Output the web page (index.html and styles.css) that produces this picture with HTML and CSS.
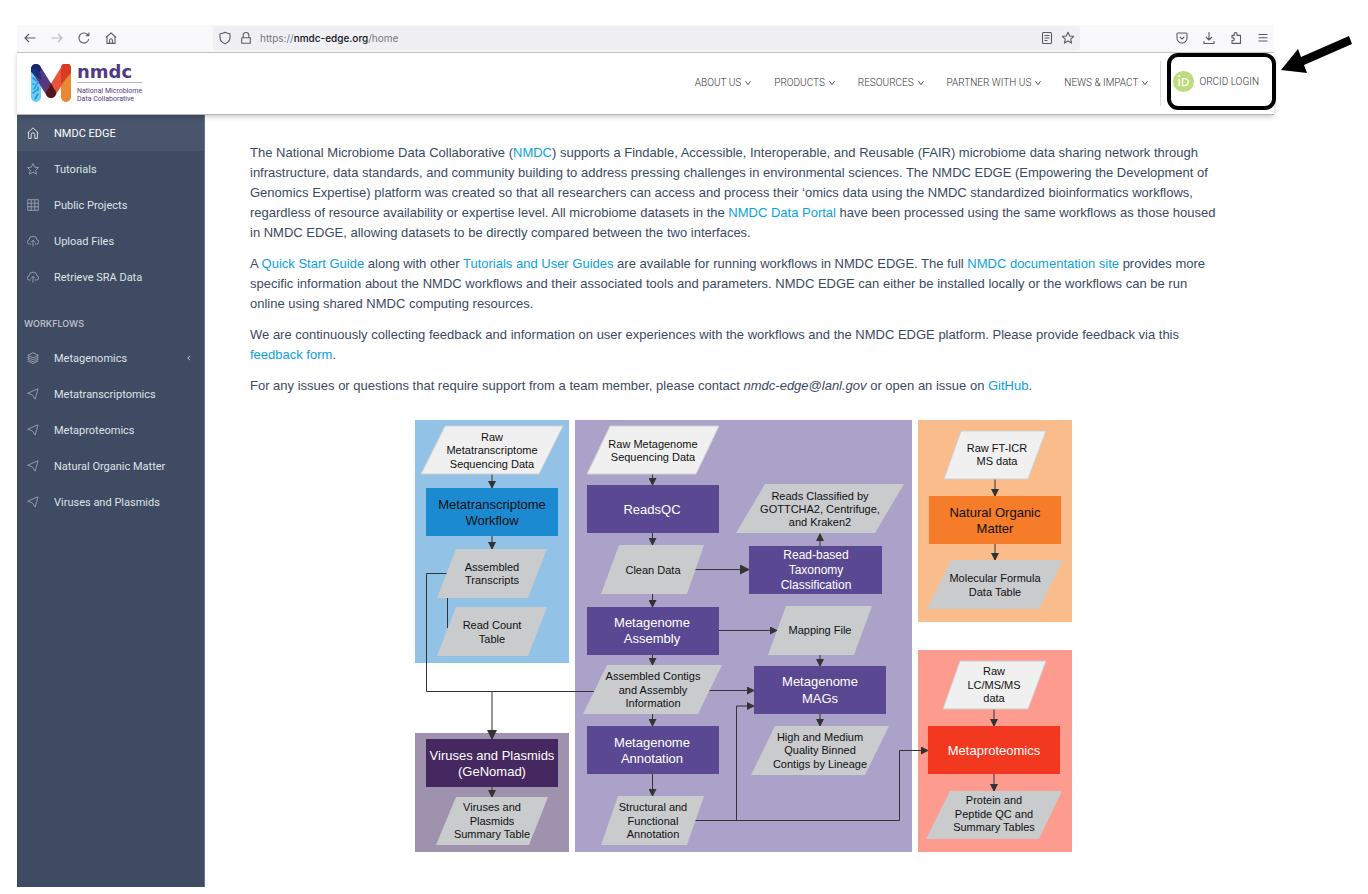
FILE: index.html
```html
<!DOCTYPE html>
<html lang="en">
<head>
<meta charset="utf-8">
<title>NMDC EDGE</title>
<link rel="stylesheet" href="styles.css">
</head>
<body>
<div class="window">
  <div class="browser-bar">
    <div class="browser-nav">
      <button class="bar-button" aria-label="Back"><svg class="bar-icon" viewBox="0 0 14 14"><path d="M12.5 7H2M6 3L2 7l4 4"/></svg></button>
      <button class="bar-button bar-button-off" aria-label="Forward"><svg class="bar-icon" viewBox="0 0 14 14"><path d="M1.500 7H12M8 3l4 4-4 4"/></svg></button>
      <button class="bar-button" aria-label="Reload"><svg class="bar-icon" viewBox="0 0 14 14"><path d="M11.800 8.200a5 5 0 1 1-1.300-4.700l1 1M11.900 1.600v3.200H8.700"/></svg></button>
      <button class="bar-button" aria-label="Home"><svg class="bar-icon" viewBox="0 0 14 14"><path d="M2 6.500L7 1.800l5 4.700M3 6v6.400h8V6M5.600 12.400V9.200a1.400 1.400 0 0 1 2.800 0v3.200"/></svg></button>
    </div>
    <div class="address">
      <svg class="bar-icon" viewBox="0 0 14 14"><path d="M7 1.300c1.600.9 3.200 1.300 5 1.400v3.800c0 3-2 5-5 6.300-3-1.300-5-3.300-5-6.300V2.700c1.800-.1 3.400-.5 5-1.400z"/></svg>
      <svg class="bar-icon" viewBox="0 0 14 14"><path d="M2.700 6.800h8.600v5.500H2.700zM4.200 6.800V4.300a2.800 2.800 0 0 1 5.600 0v2.500"/></svg>
      <span class="url">https://<b>nmdc-edge.org</b>/home</span>
      <svg class="bar-icon bar-reader" viewBox="0 0 14 14"><rect x="2.500" y="1.500" width="9" height="11" rx="1"/><path d="M4.500 4.500h5M4.500 7h5M4.500 9.500h3"/></svg>
      <svg class="bar-icon" viewBox="0 0 14 14"><path d="M7 1.300l1.700 3.700 4 .4-3 2.700.9 4-3.600-2.100-3.600 2.100.9-4-3-2.700 4-.4z"/></svg>
    </div>
    <div class="browser-tools">
      <button class="bar-button" aria-label="Pocket"><svg class="bar-icon" viewBox="0 0 14 14"><path d="M2 3a1 1 0 0 1 1-1h8a1 1 0 0 1 1 1v4a5 5 0 0 1-10 0zM4.700 5.800L7 8l2.300-2.200"/></svg></button>
      <button class="bar-button" aria-label="Downloads"><svg class="bar-icon" viewBox="0 0 14 14"><path d="M7 1v8M4 6l3 3 3-3M2 10v2.500h10V10"/></svg></button>
      <button class="bar-button" aria-label="Extensions"><svg class="bar-icon" viewBox="0 0 14 14"><path d="M5.200 4.400V3a1.400 1.400 0 0 1 2.800 0v1.400h3.500v8H3V9.500h1a1.300 1.300 0 0 0 0-2.600H3V4.400z"/></svg></button>
      <button class="bar-button" aria-label="Menu"><svg class="bar-icon" viewBox="0 0 14 14"><path d="M2.500 3.500h9M2.500 6.700h9M2.500 10h9"/></svg></button>
    </div>
  </div>

  <header class="site-header">
    <a class="logo" href="#">
      <svg class="logo-mark" viewBox="0 0 40 38">
        <g fill="none" stroke-width="10" stroke-linecap="round">
          <path d="M5 5V33" stroke="#6fcdf3"/>
          <path d="M35 5V33" stroke="#e88a35"/>
          <path d="M5 5L20 29" stroke="#55367f"/>
          <path d="M35 5L20 29" stroke="#e9553c"/>
        </g>
        <circle cx="5" cy="5" r="5" fill="#14276b"/>
        <path d="M0 5h5l5 5v6L0 8z" fill="#1c2f7c"/>
        <path d="M30 3a5 5 0 0 1 10 2v4l-10 11z" fill="#d93b20"/>
        <circle cx="20" cy="29" r="5" fill="#4f151f"/>
        <path d="M16 27l4-8 4 8z" fill="#4f151f"/>
        <path d="M2 14l3 3M7 18l-4 7M2 29l4-3M7 30l-3 5M7 23v3M2 20h1" stroke="#1a96d8" stroke-width="1.500" stroke-linecap="round"/>
      </svg>
      <span class="logo-words">
        <span class="logo-name">nmdc</span>
        <span class="logo-sub">National Microbiome<br>Data Collaborative</span>
      </span>
    </a>
    <nav class="site-nav">
      <a href="#">ABOUT US<svg class="chevron" viewBox="0 0 6 6"><path d="M.5 1.200L3 4.700l2.500-3.500"/></svg></a>
      <a href="#">PRODUCTS<svg class="chevron" viewBox="0 0 6 6"><path d="M.5 1.200L3 4.700l2.500-3.500"/></svg></a>
      <a href="#">RESOURCES<svg class="chevron" viewBox="0 0 6 6"><path d="M.5 1.200L3 4.700l2.500-3.500"/></svg></a>
      <a href="#">PARTNER WITH US<svg class="chevron" viewBox="0 0 6 6"><path d="M.5 1.200L3 4.700l2.500-3.500"/></svg></a>
      <a href="#">NEWS &amp; IMPACT<svg class="chevron" viewBox="0 0 6 6"><path d="M.5 1.200L3 4.700l2.500-3.500"/></svg></a>
    </nav>
    <div class="login">
      <button class="login-button">
        <svg class="orcid" viewBox="0 0 22 22"><circle cx="11" cy="11" r="11" fill="#bddc7c"/><g fill="none" stroke="#fff" stroke-width="1.500"><path d="M6.500 8v8M10 8v7.300h2.300a3.600 3.600 0 0 0 0-7.300z"/></g><circle cx="6.500" cy="5.300" r="1" fill="#fff"/></svg>
        ORCID LOGIN
      </button>
    </div>
  </header>

  <div class="body">
    <aside class="sidebar">
      <ul class="menu">
        <li><a class="menu-link menu-link-active" href="#"><svg class="menu-icon" viewBox="0 0 12 12"><path d="M.6 6L6 .8 11.400 6M1.600 5.200v6.200h2.600V7.600a1.800 1.800 0 0 1 3.600 0v3.800h2.600V5.200"/></svg>NMDC EDGE</a></li>
        <li><a class="menu-link" href="#"><svg class="menu-icon" viewBox="0 0 12 12"><path d="M6 .6l1.700 3.600 3.800.4-2.800 2.600.8 4L6 9.200l-3.500 2 .8-4L.5 4.600l3.800-.4z"/></svg>Tutorials</a></li>
        <li><a class="menu-link" href="#"><svg class="menu-icon" viewBox="0 0 12 12"><path d="M.7.7h10.600v10.600H.7zM4.200.7v10.600M7.800.7v10.600M.7 4.200h10.600M.7 7.800h10.600"/></svg>Public Projects</a></li>
        <li><a class="menu-link" href="#"><svg class="menu-icon" viewBox="0 0 12 12"><path d="M4 9H2.500A2 2 0 0 1 2 5a4 3.800 0 0 1 8 0 2 2 0 0 1-.5 4H8M6 11.500V5.500M4 7.300l2-2 2 2"/></svg>Upload Files</a></li>
        <li><a class="menu-link" href="#"><svg class="menu-icon" viewBox="0 0 12 12"><path d="M4 9H2.500A2 2 0 0 1 2 5a4 3.800 0 0 1 8 0 2 2 0 0 1-.5 4H8M6 11.500V5.500M4 7.300l2-2 2 2"/></svg>Retrieve SRA Data</a></li>
      </ul>
      <h2 class="menu-title">WORKFLOWS</h2>
      <ul class="menu">
        <li><a class="menu-link" href="#"><svg class="menu-icon" viewBox="0 0 12 12"><path d="M6 .8l5.300 2.500L6 5.800.7 3.300zM2.300 4.600L.7 5.400 6 7.900l5.300-2.500-1.600-.8M2.300 6.600l-1.600.8L6 9.900l5.300-2.500-1.600-.8M.7 9L6 11.500 11.300 9"/></svg>Metagenomics<svg class="menu-arrow" viewBox="0 0 6 6"><path d="M4 .8L1.800 3 4 5.200"/></svg></a></li>
        <li><a class="menu-link" href="#"><svg class="menu-icon" viewBox="0 0 12 12"><path d="M11 .8L.7 5.200l4.500 1.600 3 4.300z"/></svg>Metatranscriptomics</a></li>
        <li><a class="menu-link" href="#"><svg class="menu-icon" viewBox="0 0 12 12"><path d="M11 .8L.7 5.200l4.500 1.600 3 4.300z"/></svg>Metaproteomics</a></li>
        <li><a class="menu-link" href="#"><svg class="menu-icon" viewBox="0 0 12 12"><path d="M11 .8L.7 5.200l4.500 1.600 3 4.300z"/></svg>Natural Organic Matter</a></li>
        <li><a class="menu-link" href="#"><svg class="menu-icon" viewBox="0 0 12 12"><path d="M11 .8L.7 5.200l4.500 1.600 3 4.300z"/></svg>Viruses and Plasmids</a></li>
      </ul>
    </aside>

    <main class="content">
      <p>The National Microbiome Data Collaborative (<a href="#">NMDC</a>) supports a Findable, Accessible, Interoperable, and Reusable (FAIR) microbiome data sharing network through infrastructure, data standards, and community building to address pressing challenges in environmental sciences. The NMDC EDGE (Empowering the Development of Genomics Expertise) platform was created so that all researchers can access and process their ‘omics data using the NMDC standardized bioinformatics workflows, regardless of resource availability or expertise level. All microbiome datasets in the <a href="#">NMDC Data Portal</a> have been processed using the same workflows as those housed in NMDC EDGE, allowing datasets to be directly compared between the two interfaces.</p>
      <p>A <a href="#">Quick Start Guide</a> along with other <a href="#">Tutorials and User Guides</a> are available for running workflows in NMDC EDGE. The full <a href="#">NMDC documentation site</a> provides more specific information about the NMDC workflows and their associated tools and parameters. NMDC EDGE can either be installed locally or the workflows can be run online using shared NMDC computing resources.</p>
      <p>We are continuously collecting feedback and information on user experiences with the workflows and the NMDC EDGE platform. Please provide feedback via this <a href="#">feedback form</a>.</p>
      <p>For any issues or questions that require support from a team member, please contact <em>nmdc-edge@lanl.gov</em> or open an issue on <a href="#">GitHub</a>.</p>

      <svg class="diagram" viewBox="415 420 657 433" role="img" aria-label="NMDC workflows">
        <defs>
          <marker id="head" viewBox="0 0 8 8" refX="7" refY="4" markerWidth="8" markerHeight="8" markerUnits="userSpaceOnUse" orient="auto"><path d="M0 0L8 4 0 8z" fill="#333"/></marker>
          <marker id="head-large" viewBox="0 0 10 10" refX="9" refY="5" markerWidth="10" markerHeight="10" markerUnits="userSpaceOnUse" orient="auto"><path d="M0 0L10 5 0 10z" fill="#333"/></marker>
        </defs>
        <rect class="panel-blue" x="415" y="420" width="154" height="243"/>
        <rect class="panel-purple" x="575" y="420" width="337" height="432"/>
        <rect class="panel-orange" x="918" y="420" width="154" height="202"/>
        <rect class="panel-red" x="918" y="650" width="154" height="202"/>
        <rect class="panel-plum" x="415" y="733" width="154" height="119"/>

        <g class="wire">
          <path d="M447 573.500H426.500V691.500H595"/>
          <path d="M447.500 598V628"/>
          <path d="M687 820.500H899.500V750.500H928" marker-end="url(#head)"/>
          <path d="M736.500 820V706H754" marker-end="url(#head)"/>
          <path d="M695 569.500H749" marker-end="url(#head-large)"/>
          <path d="M719 630.500H777" marker-end="url(#head)"/>
          <path d="M709 690.500H754" marker-end="url(#head)"/>
          <path d="M492 474V488" marker-end="url(#head)"/>
          <path d="M492 536V549" marker-end="url(#head)"/>
          <path d="M492 692V739" marker-end="url(#head-large)"/>
          <path d="M492 787V797" marker-end="url(#head)"/>
          <path d="M652.500 474V485" marker-end="url(#head)"/>
          <path d="M652.500 533V545" marker-end="url(#head)"/>
          <path d="M652.500 594V607" marker-end="url(#head)"/>
          <path d="M652.500 655V665" marker-end="url(#head)"/>
          <path d="M652.500 714V726" marker-end="url(#head)"/>
          <path d="M652.500 774V796" marker-end="url(#head)"/>
          <path d="M820 546V534" marker-end="url(#head)"/>
          <path d="M820 655V666" marker-end="url(#head)"/>
          <path d="M820 714V726" marker-end="url(#head)"/>
          <path d="M995 479V496" marker-end="url(#head)"/>
          <path d="M995 544V560" marker-end="url(#head)"/>
          <path d="M994 709V726" marker-end="url(#head)"/>
          <path d="M994 774V791" marker-end="url(#head)"/>
        </g>

        <g class="input">
          <path d="M445 426H563L539 474H421z"/>
          <path d="M610 426H719L696 474H587z"/>
          <path d="M961 431H1046L1028 479H944z"/>
          <path d="M960 661H1046L1028 709H943z"/>
        </g>
        <g class="output">
          <path d="M456 549H547L528 598H437z"/>
          <path d="M456 607H547L528 656H437z"/>
          <path d="M619 545H704L687 594H601z"/>
          <path d="M607 665H722L698 714H583z"/>
          <path d="M618 796H704L687 845H601z"/>
          <path d="M765 484H904L875 533H736z"/>
          <path d="M786 606H872L854 655H768z"/>
          <path d="M775 726H889L865 775H751z"/>
          <path d="M951 560H1063L1039 609H927z"/>
          <path d="M950 791H1062L1039 839H926z"/>
          <path d="M456 797H548L529 845H436z"/>
        </g>
        <rect class="step-blue" x="426" y="488" width="132" height="48"/>
        <rect class="step-purple" x="587" y="485" width="132" height="48"/>
        <rect class="step-purple" x="587" y="607" width="132" height="48"/>
        <rect class="step-purple" x="587" y="726" width="132" height="48"/>
        <rect class="step-purple" x="749" y="546" width="133" height="48"/>
        <rect class="step-purple" x="754" y="666" width="132" height="48"/>
        <rect class="step-orange" x="929" y="496" width="132" height="48"/>
        <rect class="step-red" x="928" y="726" width="132" height="48"/>
        <rect class="step-plum" x="426" y="739" width="132" height="48"/>

        <g class="note">
          <text x="492" y="441">Raw<tspan x="492" y="454">Metatranscriptome</tspan><tspan x="492" y="468">Sequencing Data</tspan></text>
          <text x="492" y="571">Assembled<tspan x="492" y="584">Transcripts</tspan></text>
          <text x="492" y="629">Read Count<tspan x="492" y="643">Table</tspan></text>
          <text x="653" y="448">Raw Metagenome<tspan x="653" y="461">Sequencing Data</tspan></text>
          <text x="653" y="574">Clean Data</text>
          <text x="653" y="680">Assembled Contigs<tspan x="653" y="694">and Assembly</tspan><tspan x="653" y="707">Information</tspan></text>
          <text x="653" y="811">Structural and<tspan x="653" y="825">Functional</tspan><tspan x="653" y="838">Annotation</tspan></text>
          <text x="820" y="500">Reads Classified by<tspan x="820" y="513">GOTTCHA2, Centrifuge,</tspan><tspan x="820" y="526">and Kraken2</tspan></text>
          <text x="820" y="634">Mapping File</text>
          <text x="820" y="741">High and Medium<tspan x="820" y="754">Quality Binned</tspan><tspan x="820" y="768">Contigs by Lineage</tspan></text>
          <text x="997" y="452">Raw FT-ICR<tspan x="997" y="465">MS data</tspan></text>
          <text x="995" y="582">Molecular Formula<tspan x="995" y="596">Data Table</tspan></text>
          <text x="994" y="675">Raw<tspan x="994" y="689">LC/MS/MS</tspan><tspan x="994" y="702">data</tspan></text>
          <text x="994" y="804">Protein and<tspan x="994" y="818">Peptide QC and</tspan><tspan x="994" y="831">Summary Tables</tspan></text>
          <text x="492" y="811">Viruses and<tspan x="492" y="825">Plasmids</tspan><tspan x="492" y="838">Summary Table</tspan></text>
        </g>
        <g class="step-text">
          <text x="492" y="509">Metatranscriptome<tspan x="492" y="525">Workflow</tspan></text>
          <text x="995" y="517">Natural Organic<tspan x="995" y="533">Matter</tspan></text>
        </g>
        <g class="step-text step-text-light">
          <text x="652" y="514">ReadsQC</text>
          <text x="652" y="627">Metagenome<tspan x="652" y="643">Assembly</tspan></text>
          <text x="652" y="747">Metagenome<tspan x="652" y="763">Annotation</tspan></text>
          <text x="820" y="686">Metagenome<tspan x="820" y="703">MAGs</tspan></text>
          <text x="994" y="755">Metaproteomics</text>
          <text x="492" y="760">Viruses and Plasmids<tspan x="492" y="776">(GeNomad)</tspan></text>
          <text class="step-text-small" x="816" y="559">Read-based<tspan x="816" y="574">Taxonomy</tspan><tspan x="816" y="589">Classification</tspan></text>
        </g>
      </svg>
    </main>
  </div>

  <div class="callout"></div>
  <svg class="callout-arrow" viewBox="0 0 72 38"><path d="M0 34L17 13l3 8L68 0l3 8-48 21 3 8z"/></svg>
</div>
</body>
</html>
```
FILE: styles.css
```css
* { box-sizing: border-box; }

body {
  margin: 0;
  min-height: 100vh;
  padding: 25px 94px 7px 17px;
  display: flex;
  background: #fff;
  font-family: Roboto, "Liberation Sans", sans-serif;
}

button {
  border: 0;
  padding: 0;
  background: none;
  font: inherit;
  color: inherit;
}

a { text-decoration: none; color: inherit; }

.window {
  position: relative;
  flex: 1;
  display: flex;
  flex-direction: column;
}

/* Browser bar */
.browser-bar {
  display: flex;
  align-items: center;
  height: 28px;
  padding-bottom: 2px;
  background: #f9f9fb;
  border-bottom: 1px solid #c8c8cb;
}

.browser-nav { display: flex; gap: 13px; width: 196px; padding-left: 6px; }
.browser-tools { display: flex; gap: 13px; width: 194px; justify-content: flex-end; padding-right: 4px; }
.bar-button { display: flex; }
.bar-button-off { opacity: .4; }

.bar-icon {
  width: 14px;
  height: 14px;
  fill: none;
  stroke: #5b5b66;
  stroke-width: 1.1;
  stroke-linejoin: round;
}

.address {
  flex: 1;
  display: flex;
  align-items: center;
  gap: 7px;
  height: 24px;
  padding: 0 5px;
  border-radius: 3px;
  background: #f0f0f4;
}

.url { font: 10px/14px Inter, sans-serif; color: #77777e; }
.url b { font-weight: 500; color: #15141a; }
.bar-reader { margin-left: auto; }

/* Site header */
.site-header {
  position: relative;
  z-index: 1;
  display: flex;
  align-items: center;
  height: 62px;
  background: #fff;
  border-bottom: 1px solid #b4b4b4;
  box-shadow: 0 2px 5px rgba(0, 0, 0, .2);
}

.logo { display: flex; gap: 6px; padding-left: 14px; margin-right: auto; }
.logo-mark { width: 40px; height: 38px; }
.logo-words { display: flex; flex-direction: column; color: #523a82; }
.logo-name { font: bold 18px/15px "DejaVu Sans", sans-serif; padding-bottom: 3px; border-bottom: 1px solid #b9acd0; }
.logo-sub { font-size: 7px; line-height: 8px; padding-top: 4px; }

.site-nav {
  display: flex;
  gap: 23px;
  padding-bottom: 2px;
  font-size: 10px;
  line-height: 14px;
  font-weight: 300;
  color: #333;
}

.site-nav a { display: flex; align-items: center; gap: 4px; white-space: nowrap; }
.chevron { width: 6px; height: 6px; fill: none; stroke: #555; }

.login {
  display: flex;
  align-items: center;
  height: 45px;
  margin-left: 12px;
  padding: 0 15px 4px 12px;
  border-left: 1px solid #ddd;
}

.login-button {
  display: flex;
  align-items: center;
  gap: 5px;
  font-size: 10px;
  font-weight: 300;
  color: #333;
  white-space: nowrap;
}

.orcid { width: 21px; height: 21px; }

/* Page body */
.body { flex: 1; display: flex; }

.sidebar {
  flex: 0 0 188px;
  background: #3e4b63;
  border-right: 1px solid #6b7486;
  color: #dfe2e7;
}

.menu { list-style: none; margin: 0; padding: 0; }

.menu-link {
  display: flex;
  align-items: center;
  gap: 15px;
  height: 36px;
  padding: 0 12px 0 10px;
  font-size: 11px;
}

.menu-link-active { background: #49556d; color: #fff; }

.menu-icon, .menu-arrow { width: 12px; height: 12px; fill: none; stroke: #a5adb9; stroke-width: .8; }
.menu-link-active .menu-icon { stroke: #fff; }
.menu-arrow { width: 6px; height: 6px; margin-left: auto; stroke: #dfe2e7; }

.menu-title {
  margin: 0;
  padding: 23px 7px 10px;
  font: 600 9px/12px Inter, sans-serif;
  color: #b4bac4;
}

.content {
  flex: 1;
  padding: 28px 37px 0 45px;
  font: 13px/20px "Liberation Sans", sans-serif;
  color: #3c4a63;
}

.content p { margin: 0 17px 11px 0; }
.content a { color: #0aa2e2; }

/* Workflow diagram */
.diagram { display: block; width: 657px; max-width: 100%; margin: 24px auto 0; }
.panel-blue { fill: #92c3e6; }
.panel-purple { fill: #aaa2c9; }
.panel-orange { fill: #fabc8b; }
.panel-red { fill: #fd9b8f; }
.panel-plum { fill: #9f92ae; }
.step-blue { fill: #1c8ad0; }
.step-purple { fill: #5a4992; }
.step-orange { fill: #f57c28; }
.step-red { fill: #f2381f; }
.step-plum { fill: #44285f; }
.wire { fill: none; stroke: #333; stroke-width: 1; }
.input { fill: #f0f0f0; stroke: #cfcfd2; }
.output { fill: #c9cbcd; }
.note { font-size: 11px; text-anchor: middle; fill: #111; }
.step-text { font-size: 13px; text-anchor: middle; fill: #111; }
.step-text-light { fill: #fff; }
.step-text-small { font-size: 12px; }

/* Callout over the login control */
.callout {
  position: absolute;
  z-index: 2;
  top: 28px;
  right: -2px;
  width: 109px;
  height: 57px;
  border: 4px solid #000;
  border-radius: 11px;
  pointer-events: none;
}

.callout-arrow { position: absolute; z-index: 2; top: 11px; right: -79px; width: 72px; height: 38px; }
```
